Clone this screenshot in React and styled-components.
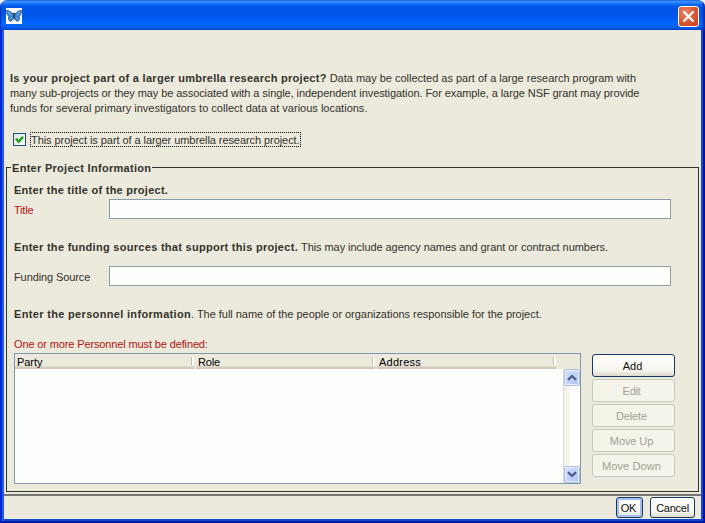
import React from "react";
import styled, { createGlobalStyle } from "styled-components";

const GlobalStyle = createGlobalStyle`
  * { box-sizing: border-box; }
  body { margin: 0; background: #f0eef0; }
`;

const Window = styled.div`
  display: flex;
  flex-direction: column;
  width: 705px;
  height: 523px;
  overflow: hidden;
  border-radius: 7px 7px 0 0;
  background: #ece9dd;
  color: #33332b;
  font: 11px/15px "Liberation Sans", Arial, sans-serif;
`;

const TitleBar = styled.header`
  display: flex;
  align-items: center;
  justify-content: space-between;
  flex: none;
  height: 30px;
  padding: 2px 6px 0;
  box-shadow: inset 2px 0 1px -1px #0a35b8, inset -3px 0 2px -1px #0a2fae;
  background: linear-gradient(
    to bottom, #0b4fc8 0, #3d95ff 1px, #2a80fb 3px, #0660ee 5px, #0055e5 8px,
    #0055e6 15px, #0262fa 21px, #0367ff 25px, #0258ea 28px, #0144cc 30px
  );
`;

const CloseButton = styled.button`
  display: flex;
  align-items: center;
  justify-content: center;
  width: 21px;
  height: 21px;
  padding: 0;
  border: 1px solid #fff;
  border-radius: 3px;
  background: radial-gradient(circle at 35% 30%, #e88a6c, #d95630 55%, #c5401c);
`;

const Client = styled.main`
  display: flex;
  flex-direction: column;
  flex: 1;
  padding: 0 2px 2px;
  border: solid;
  border-width: 0 2px 2px;
  border-color: #0020c0 #0013a0 #001ba8 #0227cf;
  box-shadow: inset 2px 0 #1c5df0, inset -2px 0 #1a47c6, inset 0 -2px #1448cc;
`;

const Run = styled.span`
  color: ${(p) => p.$color || "inherit"};
  font-weight: ${(p) => (p.$bold ? 700 : 400)};
  letter-spacing: ${(p) => p.$track || 0}px;
  white-space: pre;
`;

const Intro = styled.p`
  display: flex;
  flex-direction: column;
  margin: 41px 0 0 6px;
`;

const Line = styled.span`
  display: flex;
  gap: ${(p) => p.$gap || 0}px;
  height: 15px;
`;

const CheckRow = styled.label`
  display: flex;
  align-items: center;
  gap: 4px;
  height: 15px;
  margin: 16px 0 0 9px;
`;

const CheckBox = styled.span`
  display: flex;
  width: 13px;
  height: 13px;
  border: 1px solid #1c5180;
  background: linear-gradient(135deg, #e2e2dc, #fff);
`;

const FocusLabel = styled.span`
  width: 271px;
  height: 15px;
  border: 1px dotted #000;
  line-height: 15px;
`;

const Group = styled.fieldset`
  display: flex;
  flex-direction: column;
  width: 693px;
  height: 331px;
  margin: 14px 0 0 2px;
  padding: 0 0 0 7px;
  border: 1px solid #33332b;
`;

const Legend = styled.legend`
  height: 13px;
  margin-left: -3px;
  padding: 0 1px;
`;

const GroupLine = styled(Line)`
  flex: none;
  margin-top: ${(p) => p.$top}px;
`;

const Field = styled.label`
  display: grid;
  grid-template-columns: 95px 562px;
  flex: none;
  height: 20px;
  margin-top: ${(p) => p.$top}px;
`;

const FieldName = styled.span`
  padding-top: 4px;
`;

const Input = styled.input`
  width: 562px;
  height: 20px;
  padding: 2px 4px;
  border: 1px solid #8b9cac;
  border-radius: 0;
  background: #fdfffd;
  font: inherit;
`;

const Personnel = styled.div`
  display: flex;
  gap: 11px;
  margin-top: 1px;
`;

const Table = styled.div`
  display: flex;
  flex-direction: column;
  width: 567px;
  height: 131px;
  border: 1px solid #8197b0;
  background: #fdfffd;
`;

const TableHead = styled.div`
  display: grid;
  grid-template-columns: 179px 179px 179px 1fr;
  column-gap: 2px;
  height: 15px;
  background: #ece9dd;
`;

const HeadCell = styled.div`
  display: flex;
  justify-content: space-between;
  height: 15px;
  padding-left: 2px;
  background: linear-gradient(#ece9dd 12px, #dedacb 12px, #dedacb 13px, #d2cdbd 13px, #c9c4b4 15px);

  &::after {
    content: "";
    width: 2px;
    height: 8px;
    margin-top: 3px;
    border-left: 1px solid #c4c2b1;
    background: #fff;
  }
`;

const ColumnName = styled.span`
  color: #000;
  line-height: 17px;
`;

const TableBody = styled.div`
  display: flex;
  justify-content: flex-end;
  flex: 1;
`;

const ScrollBar = styled.div`
  display: flex;
  flex-direction: column;
  justify-content: space-between;
  width: 17px;
  border-left: 1px solid #dcdcd6;
  background: linear-gradient(to right, #f2f2ec, #f5f5f0 5px, #fdfdfc 6px, #fefefe);
`;

const ScrollButton = styled.button`
  display: flex;
  align-items: center;
  justify-content: center;
  width: 16px;
  height: 17px;
  padding: 0;
  border: 1px solid #aebfe6;
  border-radius: 2px;
  box-shadow: inset 0 0 0 1px #eaf0ff;
  background: linear-gradient(135deg, #d5e1fd, #b0c5f5);
`;

const Actions = styled.div`
  display: flex;
  flex-direction: column;
  gap: 2px;
  margin-top: 1px;
`;

const Button = styled.button`
  width: ${(p) => p.$width || 83}px;
  height: ${(p) => p.$height || 23}px;
  padding: ${(p) => p.$pad || "1px 2px 0 0"};
  border: 1px solid #173a65;
  border-radius: 3px;
  background: linear-gradient(#fff, #f5f4ee 75%, #dcd8ca);
  box-shadow: ${(p) => (p.$default ? "inset 0 0 0 2px #a5c0ee" : "none")};
  color: #111;
  font: inherit;
  text-align: center;

  &:disabled {
    padding-right: 4px;
    border-color: #c9c7ba;
    background: #f4f4eb;
    color: #a2a193;
  }
`;

const Footer = styled.footer`
  display: flex;
  justify-content: flex-end;
  gap: 7px;
  margin-top: 2px;
  padding: 1px 6px 0 0;
  border-top: 2px solid #767674;
`;

function Butterfly() {
  return (
    <svg width="16" height="16" viewBox="0 0 16 16">
      <path fill="#fff" d="M0 0h16v16H0z" />
      <path fill="#3a86d8" stroke="#2b4a70" strokeWidth=".7" d="M7.6 7.3C6 4.4 3 2 .5 2.2.5 5 1.2 7.6 3 8.6 1.6 10 2.6 13.2 4.6 13.4 6.2 13 7 11 7.6 9.4zM8.4 7.3C10 4.4 13 2 15.5 2.2 15.5 5 14.8 7.6 13 8.6c1.4 1.4.4 4.6-1.6 4.8C9.8 13 9 11 8.4 9.4z" />
      <path stroke="#5aa8ee" strokeWidth="1.4" d="m2.2 4 3 3.4M13.8 4l-3 3.4M4.2 11.2l1.4-1.6M11.8 11.2l-1.4-1.6" />
      <path fill="none" stroke="#26303c" strokeWidth="1.2" d="M8 6v5.5M6.6 4.8 8 6.5l1.4-1.7" />
    </svg>
  );
}

function Arrow({ down }) {
  return (
    <svg width="10" height="7" viewBox="0 0 10 7">
      <path d={down ? "M1 1.2l4 3.8 4-3.8" : "M1 5.8L5 2l4 3.8"} fill="none" stroke="#4d6185" strokeWidth="2.3" />
    </svg>
  );
}

const COLUMNS = [
  ["Party", -0.05],
  ["Role", -0.2],
  ["Address", 0.25],
];

const ACTIONS = [
  ["Add", 0],
  ["Edit", -0.3],
  ["Delete", -0.15],
  ["Move Up", -0.1],
  ["Move Down", 0.1],
];

const RED = "#b3120f";

export default function App() {
  return (
    <>
      <GlobalStyle />
      <Window>
        <TitleBar>
          <Butterfly />
          <CloseButton aria-label="Close">
            <svg width="13" height="13" viewBox="0 0 13 13">
              <path d="M1.5 1.5l10 10M11.5 1.5l-10 10" stroke="#fff" strokeWidth="2.2" />
            </svg>
          </CloseButton>
        </TitleBar>
        <Client>
          <Intro>
            <Line $gap={3}>
              <Run $bold $track={0.28}>Is your project part of a larger umbrella research project?</Run>
              <Run $track={-0.01}>Data may be collected as part of a large research program with</Run>
            </Line>
            <Line>
              <Run $track={-0.075}>many sub-projects or they may be associated with a single, independent investigation. For example, a large NSF grant may provide</Run>
            </Line>
            <Line>
              <Run $track={0.005}>funds for several primary investigators to collect data at various locations.</Run>
            </Line>
          </Intro>
          <CheckRow>
            <CheckBox>
              <svg width="11" height="11" viewBox="0 0 11 11">
                <path d="M2 4.6l2.6 3L9 2.8" fill="none" stroke="#21a121" strokeWidth="2.5" />
              </svg>
            </CheckBox>
            <FocusLabel>
              <Run $track={-0.07}>This project is part of a larger umbrella research project.</Run>
            </FocusLabel>
          </CheckRow>
          <Group>
            <Legend>
              <Run $bold $track={0.29}>Enter Project Information</Run>
            </Legend>
            <GroupLine $top={9}>
              <Run $bold $track={0.26}>Enter the title of the project.</Run>
            </GroupLine>
            <Field $top={1}>
              <FieldName><Run $color={RED} $track={-0.2}>Title</Run></FieldName>
              <Input />
            </Field>
            <GroupLine $top={21} $gap={3}>
              <Run $bold $track={0.29}>Enter the funding sources that support this project.</Run>
              <Run $track={-0.06}>This may include agency names and grant or contract numbers.</Run>
            </GroupLine>
            <Field $top={11}>
              <FieldName><Run $track={-0.1}>Funding Source</Run></FieldName>
              <Input />
            </Field>
            <GroupLine $top={21}>
              <Run $bold $track={0.33}>Enter the personnel information</Run>
              <Run $track={-0.035}>. The full name of the people or organizations responsible for the project.</Run>
            </GroupLine>
            <GroupLine $top={15}>
              <Run $color={RED} $track={-0.13}>One or more Personnel must be defined:</Run>
            </GroupLine>
            <Personnel>
              <Table>
                <TableHead>
                  {COLUMNS.map(([name, track]) => (
                    <HeadCell key={name}>
                      <ColumnName><Run $track={track}>{name}</Run></ColumnName>
                    </HeadCell>
                  ))}
                </TableHead>
                <TableBody>
                  <ScrollBar>
                    <ScrollButton aria-label="Scroll up"><Arrow /></ScrollButton>
                    <ScrollButton aria-label="Scroll down"><Arrow down /></ScrollButton>
                  </ScrollBar>
                </TableBody>
              </Table>
              <Actions>
                {ACTIONS.map(([name, track]) => (
                  <Button key={name} disabled={name !== "Add"}>
                    <Run $track={track}>{name}</Run>
                  </Button>
                ))}
              </Actions>
            </Personnel>
          </Group>
          <Footer>
            <Button $width={27} $height={21} $pad="1px 2px 0 0" $default><Run $track={-0.2}>OK</Run></Button>
            <Button $width={45} $height={21} $pad="1px 0 0"><Run $track={-0.25}>Cancel</Run></Button>
          </Footer>
        </Client>
      </Window>
    </>
  );
}
